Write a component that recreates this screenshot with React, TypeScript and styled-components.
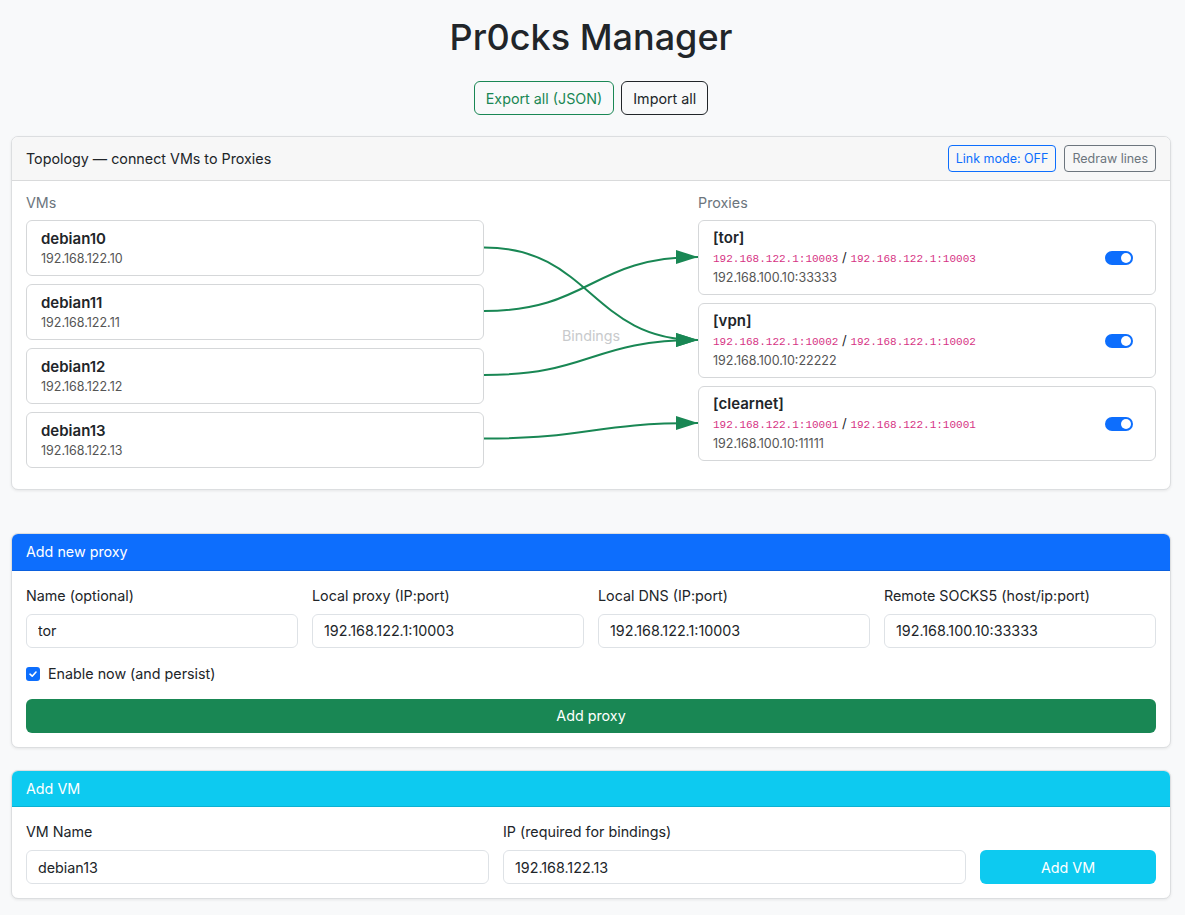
import React from 'react';
import styled, { createGlobalStyle, css } from 'styled-components';

// data

const vms = [
  { name: 'debian10', ip: '192.168.122.10' },
  { name: 'debian11', ip: '192.168.122.11' },
  { name: 'debian12', ip: '192.168.122.12' },
  { name: 'debian13', ip: '192.168.122.13' },
];

const proxies = [
  { name: 'tor', local: '192.168.122.1:10003', dns: '192.168.122.1:10003', remote: '192.168.100.10:33333' },
  { name: 'vpn', local: '192.168.122.1:10002', dns: '192.168.122.1:10002', remote: '192.168.100.10:22222' },
  { name: 'clearnet', local: '192.168.122.1:10001', dns: '192.168.122.1:10001', remote: '192.168.100.10:11111' },
];

// y centres inside the link area (vm index -> proxy index)
const vmY = [54.5, 118, 182, 245.5];
const proxyY = [64, 147, 230];
const bindings: [number, number][] = [
  [0, 1],
  [1, 0],
  [2, 1],
  [3, 2],
];

const LINK_W = 214;

const App: React.FC = () => {
  return (
    <>
      <GlobalStyle />
      <Page>
        <Title>Pr0cks Manager</Title>
        <Toolbar>
          <OutlineButton $color='#198754'>Export all (JSON)</OutlineButton>
          <OutlineButton $color='#212529'>Import all</OutlineButton>
        </Toolbar>

        <Card>
          <TopologyHeader>
            <span>Topology — connect VMs to Proxies</span>
            <HeaderActions>
              <SmallButton $color='#0d6efd'>Link mode: OFF</SmallButton>
              <SmallButton $color='#6c757d'>Redraw lines</SmallButton>
            </HeaderActions>
          </TopologyHeader>
          <TopologyBody>
            <Column>
              <ColumnLabel>VMs</ColumnLabel>
              <NodeList>
                {vms.map((vm) => (
                  <VmNode key={vm.name}>
                    <NodeName>{vm.name}</NodeName>
                    <NodeSub>{vm.ip}</NodeSub>
                  </VmNode>
                ))}
              </NodeList>
            </Column>

            <LinkArea>
              <BindingsHint>Bindings</BindingsHint>
              <LinkSvg width={LINK_W} height='100%'>
                <defs>
                  <marker
                    id='arrow'
                    markerUnits='userSpaceOnUse'
                    markerWidth='22'
                    markerHeight='16'
                    refX='22'
                    refY='8'
                    orient='auto'
                  >
                    <path d='M0,1 L22,8 L0,15 z' fill='#198754' />
                  </marker>
                </defs>
                {bindings.map(([v, p]) => {
                  const y1 = vmY[v];
                  const y2 = proxyY[p];
                  const mid = LINK_W / 2;
                  return (
                    <path
                      key={`${v}-${p}`}
                      d={`M0,${y1} C${mid},${y1} ${mid},${y2} ${LINK_W},${y2}`}
                      stroke='#198754'
                      strokeWidth='2'
                      fill='none'
                      markerEnd='url(#arrow)'
                    />
                  );
                })}
              </LinkSvg>
            </LinkArea>

            <Column>
              <ColumnLabel>Proxies</ColumnLabel>
              <NodeList>
                {proxies.map((px) => (
                  <ProxyNode key={px.name}>
                    <div>
                      <NodeName>[{px.name}]</NodeName>
                      <CodeLine>
                        <Code>{px.local}</Code> / <Code>{px.dns}</Code>
                      </CodeLine>
                      <NodeSub>{px.remote}</NodeSub>
                    </div>
                    <Switch $on />
                  </ProxyNode>
                ))}
              </NodeList>
            </Column>
          </TopologyBody>
        </Card>

        <FormCard $gap={43}>
          <CardHeader $tone='#0d6efd'>Add new proxy</CardHeader>
          <FormBody>
            <FieldGrid $cols='1fr 1fr 1fr 1fr'>
              <Field>
                <Label>Name (optional)</Label>
                <Input defaultValue='tor' />
              </Field>
              <Field>
                <Label>Local proxy (IP:port)</Label>
                <Input defaultValue='192.168.122.1:10003' />
              </Field>
              <Field>
                <Label>Local DNS (IP:port)</Label>
                <Input defaultValue='192.168.122.1:10003' />
              </Field>
              <Field>
                <Label>Remote SOCKS5 (host/ip:port)</Label>
                <Input defaultValue='192.168.100.10:33333' />
              </Field>
            </FieldGrid>
            <CheckRow>
              <CheckBox>
                <svg width='10' height='10' viewBox='0 0 10 10'>
                  <path d='M2 5.2 L4.2 7.2 L8 3' stroke='#fff' strokeWidth='1.6' fill='none' strokeLinecap='round' strokeLinejoin='round' />
                </svg>
              </CheckBox>
              Enable now (and persist)
            </CheckRow>
            <SolidButton $color='#198754'>Add proxy</SolidButton>
          </FormBody>
        </FormCard>

        <FormCard $gap={22}>
          <CardHeader $tone='#0dcaf0'>Add VM</CardHeader>
          <FormBody>
            <FieldGrid $cols='1fr 1fr 176px'>
              <Field>
                <Label>VM Name</Label>
                <Input defaultValue='debian13' />
              </Field>
              <Field>
                <Label>IP (required for bindings)</Label>
                <Input defaultValue='192.168.122.13' />
              </Field>
              <Field>
                <Label>&nbsp;</Label>
                <SolidButton $color='#0dcaf0'>Add VM</SolidButton>
              </Field>
            </FieldGrid>
          </FormBody>
        </FormCard>
      </Page>
    </>
  );
};

const GlobalStyle = createGlobalStyle`
  * { box-sizing: border-box; }
  body {
    margin: 0;
    background: #f8f9fa;
    color: #212529;
    font-family: Inter, "Noto Sans", sans-serif;
    font-size: 14.3px;
  }
`;

const Page = styled.div`
  padding: 0 14px 20px 11px;
`;

const Title = styled.h1`
  margin: 0;
  padding-top: 14px;
  text-align: center;
  font-size: 36px;
  font-weight: 500;
  line-height: 46px;
`;

const Toolbar = styled.div`
  display: flex;
  justify-content: center;
  gap: 7px;
  margin-top: 21px;
  margin-bottom: 21px;
`;

const outline = css<{ $color: string }>`
  background: transparent;
  border: 1px solid ${(p) => p.$color};
  color: ${(p) => p.$color};
  font-family: inherit;
  cursor: pointer;
`;

const OutlineButton = styled.button<{ $color: string }>`
  ${outline};
  height: 34px;
  padding: 0 11px;
  font-size: 14.3px;
  border-radius: 6px;
`;

const SmallButton = styled.button<{ $color: string }>`
  ${outline};
  height: 27px;
  padding: 0 7px;
  font-size: 12.5px;
  border-radius: 4px;
`;

const Card = styled.section`
  background: #fff;
  border: 1px solid #dcdee0;
  border-radius: 7px;
  box-shadow: 0 1px 3px rgba(0, 0, 0, 0.08);
  overflow: hidden;
`;

const FormCard = styled(Card)<{ $gap: number }>`
  margin-top: ${(p) => p.$gap}px;
`;

const TopologyHeader = styled.header`
  display: flex;
  align-items: center;
  justify-content: space-between;
  height: 44px;
  padding: 0 14px;
  background: #f7f7f7;
  border-bottom: 1px solid #d9dadb;
  font-size: 14.3px;
`;

const HeaderActions = styled.div`
  display: flex;
  gap: 8px;
`;

const CardHeader = styled.header<{ $tone: string }>`
  height: 36.5px;
  display: flex;
  align-items: center;
  padding: 0 14px;
  background: ${(p) => p.$tone};
  color: #fff;
  font-size: 14.3px;
  border-bottom: 1px solid rgba(0, 0, 0, 0.12);
`;

const TopologyBody = styled.div`
  display: grid;
  grid-template-columns: 1fr ${LINK_W}px 1fr;
  padding: 12px 14px 21px;
`;

const Column = styled.div`
  display: flex;
  flex-direction: column;
`;

const ColumnLabel = styled.div`
  color: #6c757d;
  font-size: 14.3px;
  line-height: 20px;
  margin-bottom: 7px;
`;

const NodeList = styled.div`
  display: flex;
  flex-direction: column;
  gap: 8px;
`;

const VmNode = styled.div`
  border: 1px solid #d5d7d9;
  border-radius: 6px;
  height: 56px;
  padding: 8px 14px 0;
`;

const ProxyNode = styled(VmNode)`
  height: 75px;
  display: flex;
  align-items: center;
  justify-content: space-between;
  padding: 0 22px 0 14px;
`;

const NodeName = styled.div`
  font-weight: 600;
  font-size: 15px;
  line-height: 20px;
`;

const NodeSub = styled.div`
  color: #555;
  font-size: 12.5px;
  line-height: 19px;
`;

const CodeLine = styled.div`
  font-size: 13px;
  line-height: 18px;
  color: #212529;
`;

const Code = styled.code`
  font-family: 'Liberation Mono', monospace;
  font-size: 11px;
  color: #d63384;
`;

const Switch = styled.span<{ $on?: boolean }>`
  position: relative;
  width: 28px;
  height: 14px;
  border-radius: 7px;
  background: ${(p) => (p.$on ? '#0d6efd' : '#dee2e6')};
  &::after {
    content: '';
    position: absolute;
    top: 2px;
    left: ${(p) => (p.$on ? '16px' : '2px')};
    width: 10px;
    height: 10px;
    border-radius: 50%;
    background: #fff;
  }
`;

const LinkArea = styled.div`
  position: relative;
  display: flex;
  align-items: center;
  justify-content: center;
  padding-top: 10px;
`;

const BindingsHint = styled.span`
  color: #c8cacc;
  font-size: 14.3px;
`;

const LinkSvg = styled.svg`
  position: absolute;
  top: 0;
  left: 0;
  overflow: visible;
`;

const FormBody = styled.div`
  padding: 15px 14px 14px;
`;

const FieldGrid = styled.div<{ $cols: string }>`
  display: grid;
  grid-template-columns: ${(p) => p.$cols};
  gap: 14px;
`;

const Field = styled.div`
  display: flex;
  flex-direction: column;
`;

const Label = styled.label`
  font-size: 14.3px;
  line-height: 20px;
  margin-bottom: 8px;
`;

const Input = styled.input`
  height: 34px;
  padding: 0 11px;
  border: 1px solid #dee2e6;
  border-radius: 6px;
  font-family: inherit;
  font-size: 14.3px;
  color: #212529;
`;

const CheckRow = styled.label`
  display: flex;
  align-items: center;
  gap: 8px;
  margin: 16px 0 15px;
  font-size: 14.3px;
  line-height: 20px;
`;

const CheckBox = styled.span`
  width: 14px;
  height: 14px;
  border-radius: 3px;
  background: #0d6efd;
  display: flex;
  align-items: center;
  justify-content: center;
`;

const SolidButton = styled.button<{ $color: string }>`
  height: 34px;
  width: 100%;
  border: none;
  border-radius: 6px;
  background: ${(p) => p.$color};
  color: #fff;
  font-family: inherit;
  font-size: 14.3px;
  cursor: pointer;
`;

export default App;
